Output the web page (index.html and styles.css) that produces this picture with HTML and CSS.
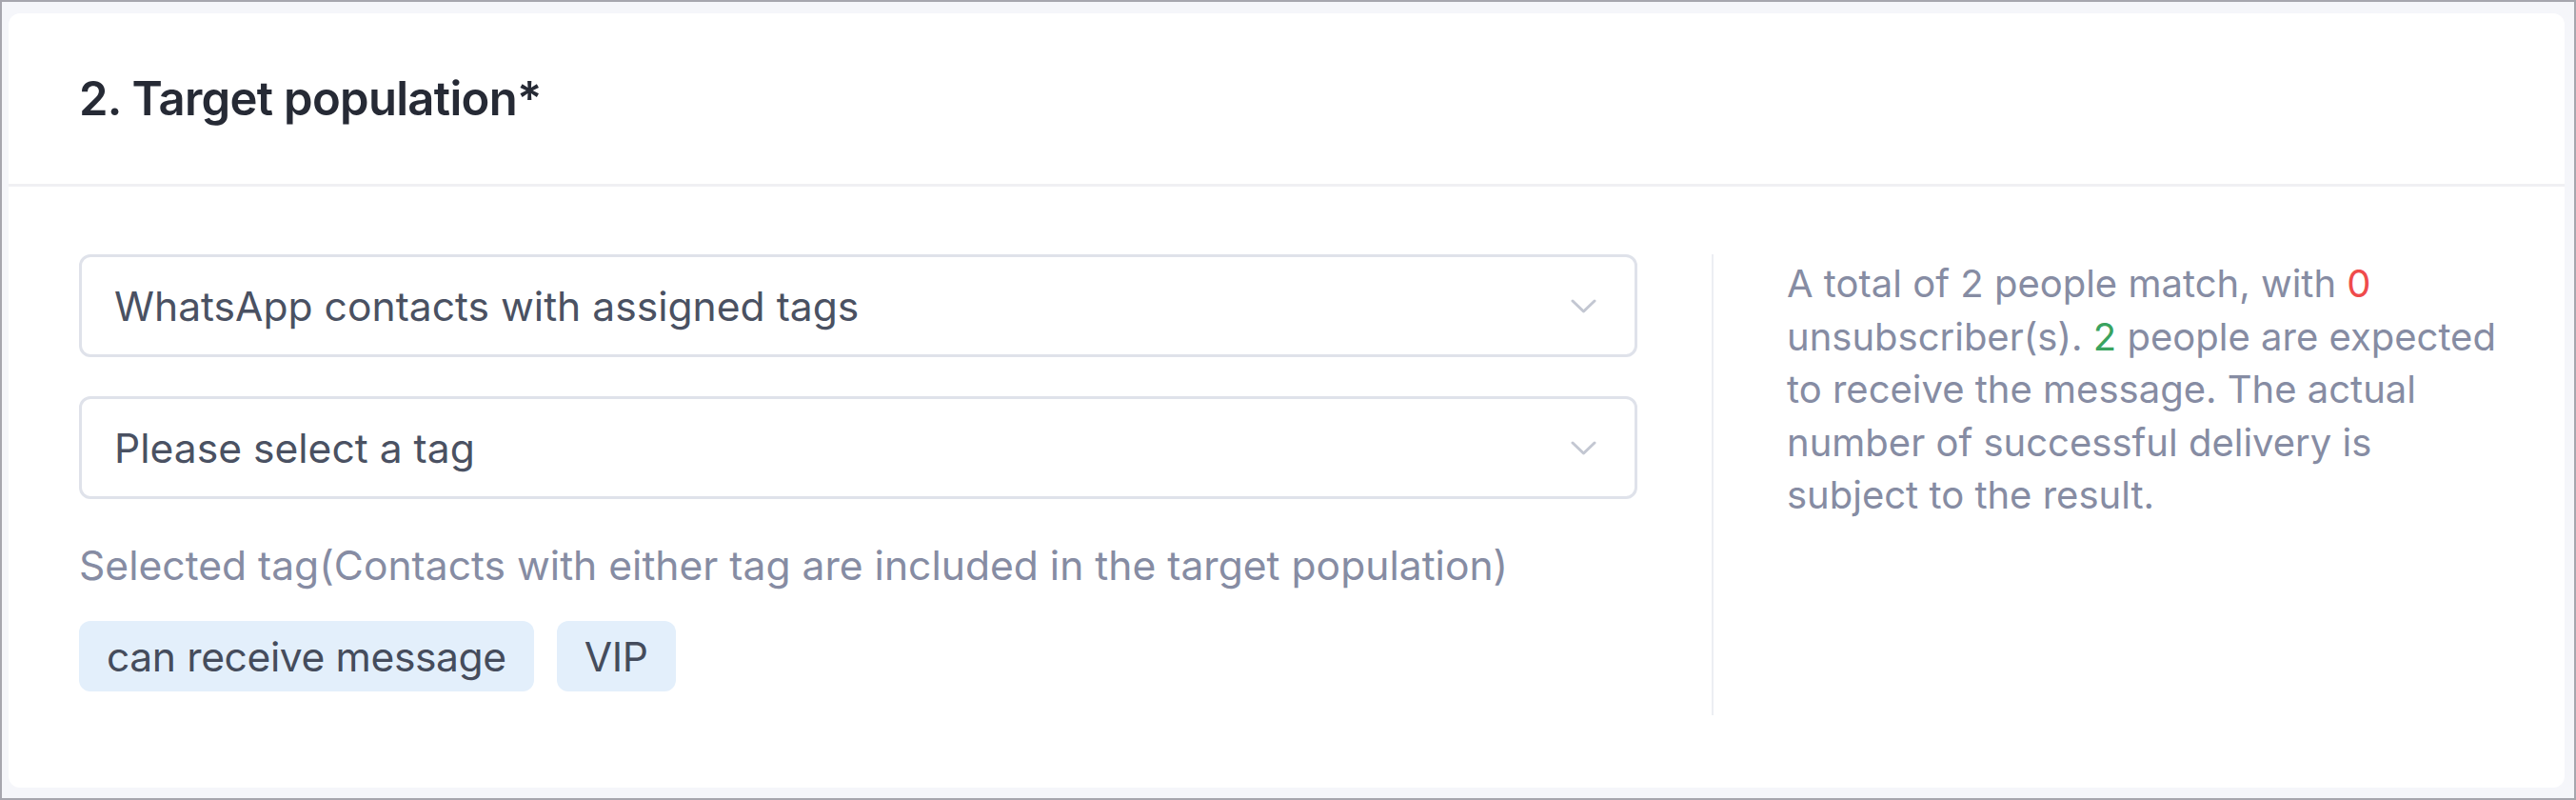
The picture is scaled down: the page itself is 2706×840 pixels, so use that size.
FILE: index.html
```html
<!DOCTYPE html>
<html lang="en">
<head>
<meta charset="utf-8">
<title>Target population</title>
<link rel="stylesheet" href="styles.css">
</head>
<body>
<div class="frame">
  <section class="card">
    <header class="card-header">
      <h2 class="card-title">2. Target population*</h2>
    </header>
    <div class="card-body">
      <div class="form-col">
        <div class="select">
          <span class="select-value">WhatsApp contacts with assigned tags</span>
          <svg class="chevron" viewBox="0 0 27 15" width="27" height="15" aria-hidden="true"><path d="M2 2 L13.5 13 L25 2" fill="none" stroke="#c3c7d2" stroke-width="3" stroke-linecap="round" stroke-linejoin="round"/></svg>
        </div>
        <div class="select">
          <span class="select-value">Please select a tag</span>
          <svg class="chevron" viewBox="0 0 27 15" width="27" height="15" aria-hidden="true"><path d="M2 2 L13.5 13 L25 2" fill="none" stroke="#c3c7d2" stroke-width="3" stroke-linecap="round" stroke-linejoin="round"/></svg>
        </div>
        <p class="hint">Selected tag(Contacts with either tag are included in the target population)</p>
        <div class="tags">
          <span class="tag">can receive message</span>
          <span class="tag">VIP</span>
        </div>
      </div>
      <div class="summary-col">
        <p class="summary">A total of 2 people match, with <span class="num-red">0</span> unsubscriber(s). <span class="num-green">2</span> people are expected to receive the message. The actual number of successful delivery is subject to the result.</p>
      </div>
    </div>
  </section>
</div>
</body>
</html>
```

FILE: styles.css
```css
* { box-sizing: border-box; }

html, body {
  margin: 0;
  padding: 0;
}

body {
  font-family: Inter, "Noto Sans", "Liberation Sans", sans-serif;
  background: #f5f6fa;
}

.frame {
  width: 2706px;
  height: 840px;
  border: 2px solid #a6a6ae;
  padding: 12px 10px 11px 7px;
  background: #f5f6fa;
  display: flex;
  flex-direction: column;
}

.card {
  flex: 1;
  background: #ffffff;
  border-radius: 12px;
  display: flex;
  flex-direction: column;
}

.card-header {
  height: 182px;
  border-bottom: 3px solid #f0f0f3;
  display: flex;
  align-items: center;
  padding: 0 74px;
}

.card-title {
  margin: 0;
  font-size: 49px;
  font-weight: 600;
  color: #262a35;
  letter-spacing: -0.7px;
}

.card-body {
  display: flex;
  padding: 71px 60px 74px 74px;
}

.form-col {
  flex: 1;
  display: flex;
  flex-direction: column;
  padding-bottom: 25px;
}

.select {
  height: 108px;
  border: 3px solid #dfe2ea;
  border-radius: 12px;
  display: flex;
  align-items: center;
  padding: 0 40px 0 34px;
  font-size: 42.6px;
  color: #4a5162;
}

.select + .select {
  margin-top: 41px;
}

.select-value {
  flex: 1;
}

.chevron {
  display: block;
}

.hint {
  margin: 40px 0 0 0;
  font-size: 42.6px;
  line-height: 60px;
  color: #868ca3;
}

.tags {
  display: flex;
  gap: 24px;
  margin-top: 28px;
}

.tag {
  height: 74px;
  line-height: 76px;
  padding: 0 29px;
  background: #e3effb;
  border-radius: 12px;
  font-size: 42.6px;
  letter-spacing: -0.4px;
  color: #454c5c;
}

.summary-col {
  flex: 0 0 836px;
  margin-left: 78px;
  border-left: 2px solid #eceef3;
  padding-left: 77px;
}

.summary {
  margin: 3px 0 0 0;
  font-size: 40px;
  line-height: 55.5px;
  color: #868ca3;
}

.num-red { color: #ef4b4b; }
.num-green { color: #3aa35f; }
```
